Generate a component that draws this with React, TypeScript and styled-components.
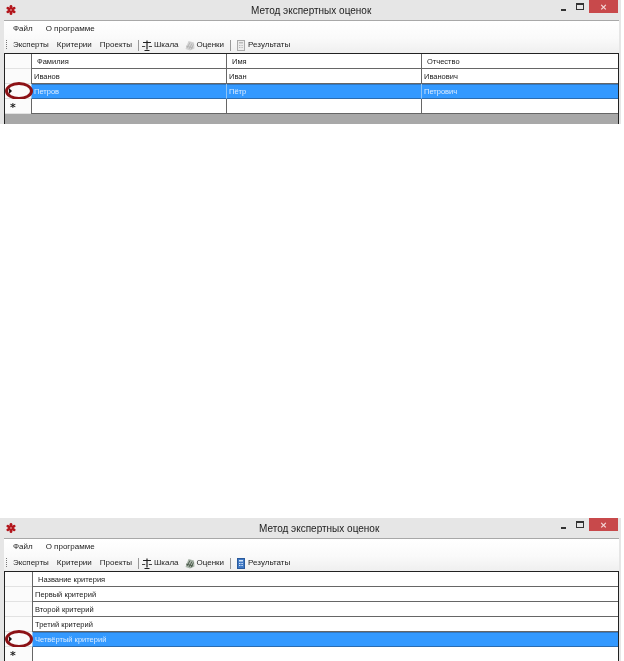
import * as React from 'react';
import styled, { createGlobalStyle } from 'styled-components';

const GlobalStyle = createGlobalStyle`
  html, body {
    margin: 0;
    padding: 0;
    background: #ffffff;
  }
  body {
    font-family: "Liberation Sans", Arial, sans-serif;
    width: 624px;
    height: 661px;
    overflow: hidden;
  }
`;

const Page = styled.div`
  display: flex;
  flex-direction: column;
  gap: 394px;
  width: 624px;
`;

const Window = styled.div<{ $height: number }>`
  width: 621px;
  height: ${(p) => p.$height}px;
  background: #e6e6e6;
  display: flex;
  flex-direction: column;
  overflow: hidden;
  filter: blur(0.35px);
`;

const TitleBar = styled.div`
  height: 20px;
  flex: none;
  position: relative;
  display: flex;
  align-items: center;
  font-size: 10px;
  color: #222;
`;

const AppIcon = styled.svg`
  position: absolute;
  left: 6px;
  top: 5px;
  width: 10px;
  height: 10px;
`;

const Title = styled.div<{ $left: number }>`
  padding-left: ${(p) => p.$left}px;
  white-space: nowrap;
`;

const WinButtons = styled.div`
  position: absolute;
  right: 3px;
  top: 0;
  display: flex;
  align-items: flex-start;
`;

const MinBtn = styled.div`
  width: 5px;
  height: 2px;
  background: #333;
  margin: 9px 10px 0 0;
`;

const MaxBtn = styled.div`
  width: 6px;
  height: 4px;
  border: 1px solid #333;
  border-top-width: 2px;
  margin: 3px 5px 0 0;
`;

const CloseBtn = styled.div`
  width: 29px;
  height: 13px;
  background: #c8494b;
  color: #f4d8d8;
  font-size: 9px;
  line-height: 14px;
  text-align: center;
  font-family: "DejaVu Sans", sans-serif;
  font-weight: 700;
`;

const Client = styled.div`
  margin: 0 2px 0 4px;
  flex: 1;
  min-height: 0;
  display: flex;
  flex-direction: column;
  border-top: 1px solid #a8a8a8;
  background: #fff;
`;

const Menu = styled.div`
  height: 17px;
  flex: none;
  display: flex;
  align-items: flex-start;
  gap: 13px;
  padding-left: 9px;
  padding-top: 3px;
  box-sizing: border-box;
  font-size: 8px;
  line-height: 10px;
  color: #222;
  background: linear-gradient(#ffffff, #fafafa);
`;

const Toolbar = styled.div`
  height: 15px;
  flex: none;
  display: flex;
  align-items: flex-start;
  padding: 2px 0 0 2px;
  box-sizing: border-box;
  font-size: 8px;
  line-height: 10px;
  color: #222;
  background: linear-gradient(#fafafa, #efefef);
`;

const Grip = styled.div`
  width: 1px;
  height: 10px;
  margin-right: 6px;
  background-image: linear-gradient(#777 50%, transparent 50%);
  background-size: 1px 2px;
`;

const ToolText = styled.span<{ $gap?: number }>`
  margin-right: ${(p) => p.$gap ?? 8}px;
  white-space: nowrap;
`;

const ToolSep = styled.div<{ $after?: number }>`
  width: 1px;
  height: 11px;
  background: #999;
  margin: 0 ${(p) => p.$after ?? 3}px 0 -2px;
`;

const ToolIcon = styled.svg`
  width: 10px;
  height: 11px;
  margin-right: 2px;
  flex: none;
`;

const GridBox = styled.div`
  flex: 1;
  min-height: 0;
  border: 1px solid #222;
  border-bottom: none;
  background: #a8a8a8;
  box-shadow: inset 0 1px 0 #777;
  font-size: 7.5px;
  color: #1a1a1a;
`;

const Row = styled.div<{ $cols: string; $selected?: boolean }>`
  display: grid;
  grid-template-columns: ${(p) => p.$cols};
  height: 15px;
  background: ${(p) => (p.$selected ? '#3399ff' : '#ffffff')};
  color: ${(p) => (p.$selected ? '#dcecff' : '#1a1a1a')};
`;

const Cell = styled.div<{ $header?: boolean; $selected?: boolean }>`
  display: flex;
  align-items: center;
  padding-left: ${(p) => (p.$header ? 5 : 2)}px;
  border-left: 1px solid ${(p) => (p.$selected ? '#8fc4f5' : '#666')};
  border-bottom: 1px solid ${(p) => (p.$selected ? '#2b6cb0' : '#666')};
  box-shadow: ${(p) => (p.$selected ? 'inset 0 1px 0 #2f78c4' : 'none')};
  white-space: nowrap;
  overflow: hidden;
`;

const RowHead = styled.div`
  position: relative;
  display: flex;
  align-items: center;
  padding-left: 4px;
  background: #fbfbfb;
  border-bottom: 1px solid #e2e2e2;
  color: #222;
`;

const Arrow = styled.div`
  width: 0;
  height: 0;
  border-left: 3px solid #111;
  border-top: 3px solid transparent;
  border-bottom: 3px solid transparent;
`;

const Oval = styled.div`
  position: absolute;
  left: 0;
  top: -2px;
  width: 22px;
  height: 12px;
  border: 3px solid #8c1216;
  border-radius: 50%;
`;

const Mark = styled.span`
  font-family: "DejaVu Sans", sans-serif;
  font-size: 11px;
  font-weight: 700;
  line-height: 11px;
  padding: 3px 0 0 1px;
`;

const Gear = () => (
  <AppIcon viewBox="0 0 11 11">
    <g stroke="#b3161c" strokeWidth="3" strokeLinecap="round">
      <line x1="5.5" y1="1.5" x2="5.5" y2="9.5" />
      <line x1="2" y1="3.5" x2="9" y2="7.5" />
      <line x1="2" y1="7.5" x2="9" y2="3.5" />
    </g>
    <circle cx="5.5" cy="5.5" r="0.9" fill="#f3c7c7" />
  </AppIcon>
);

const ScaleIcon = () => (
  <ToolIcon viewBox="0 0 10 11">
    <path d="M5 0.5v9M1 2.5h8M2.5 10.5h5" stroke="#222" strokeWidth="1.2" fill="none" />
    <path d="M0 6.5h3.2M6.8 6.5h3.2" stroke="#444" strokeWidth="1.2" />
  </ToolIcon>
);

const BooksIcon = ({ active }: { active?: boolean }) => (
  <ToolIcon viewBox="0 0 10 11">
    <path d="M0.5 9l3-8 5.5 1.5 0.5 6-4.5 2z" fill={active ? '#a9b5a9' : '#d2d2d2'} />
    <path d="M2 8l3-5.5M4 9l3-5.5M6 9.5l2.5-5M1 6l7 2" stroke={active ? '#3d4d3d' : '#aeaeae'} strokeWidth="0.8" />
  </ToolIcon>
);

const CalcIcon = ({ active }: { active?: boolean }) => (
  <ToolIcon viewBox="0 0 10 11">
    <rect x="1.5" y="0.5" width="7" height="10" fill={active ? '#3f78c4' : '#ececec'} stroke={active ? '#2a5a9c' : '#aaa'} />
    <rect x="3" y="2" width="4" height="1.5" fill={active ? '#d5e6f8' : '#bbb'} />
    <path d="M3 5.5h4M3 7.5h4" stroke={active ? '#d5e6f8' : '#bbb'} strokeDasharray="1 0.6" />
  </ToolIcon>
);

interface IAppWindowProps {
  height: number;
  titleLeft: number;
  active?: boolean;
  cols: string;
  headers: string[];
  rows: string[][];
  selected: number;
}

const AppWindow = (props: IAppWindowProps) => {
  return (
    <Window $height={props.height}>
      <TitleBar>
        <Gear />
        <Title $left={props.titleLeft}>Метод экспертных оценок</Title>
        <WinButtons>
          <MinBtn />
          <MaxBtn />
          <CloseBtn>×</CloseBtn>
        </WinButtons>
      </TitleBar>
      <Client>
        <Menu>
          <span>Файл</span>
          <span>О программе</span>
        </Menu>
        <Toolbar>
          <Grip />
          <ToolText>Эксперты</ToolText>
          <ToolText>Критерии</ToolText>
          <ToolText>Проекты</ToolText>
          <ToolSep />
          <ScaleIcon />
          <ToolText $gap={6}>Шкала</ToolText>
          <BooksIcon active={props.active} />
          <ToolText>Оценки</ToolText>
          <ToolSep $after={5} />
          <CalcIcon active={props.active} />
          <ToolText>Результаты</ToolText>
        </Toolbar>
        <GridBox>
          <Row $cols={props.cols}>
            <RowHead />
            {props.headers.map((h) => (
              <Cell key={h} $header>
                {h}
              </Cell>
            ))}
          </Row>
          {props.rows.map((r, i) => (
            <Row key={i} $cols={props.cols} $selected={i === props.selected}>
              <RowHead>
                {i === props.selected && <Arrow />}
                {i === props.selected && <Oval />}
              </RowHead>
              {r.map((c, j) => (
                <Cell key={j} $selected={i === props.selected}>
                  {c}
                </Cell>
              ))}
            </Row>
          ))}
          <Row $cols={props.cols}>
            <RowHead>
              <Mark>*</Mark>
            </RowHead>
            {props.headers.map((h) => (
              <Cell key={h} />
            ))}
          </Row>
        </GridBox>
      </Client>
    </Window>
  );
};

export default function App() {
  return (
    <>
      <GlobalStyle />
      <Page>
        <AppWindow
          height={124}
          titleLeft={251}
          cols="26px 195px 195px 1fr"
          headers={['Фамилия', 'Имя', 'Отчество']}
          rows={[
            ['Иванов', 'Иван', 'Иванович'],
            ['Петров', 'Пётр', 'Петрович'],
          ]}
          selected={1}
        />
        <AppWindow
          height={143}
          titleLeft={259}
          active
          cols="27px 1fr"
          headers={['Название критерия']}
          rows={[['Первый критерий'], ['Второй критерий'], ['Третий критерий'], ['Четвёртый критерий']]}
          selected={3}
        />
      </Page>
    </>
  );
}
